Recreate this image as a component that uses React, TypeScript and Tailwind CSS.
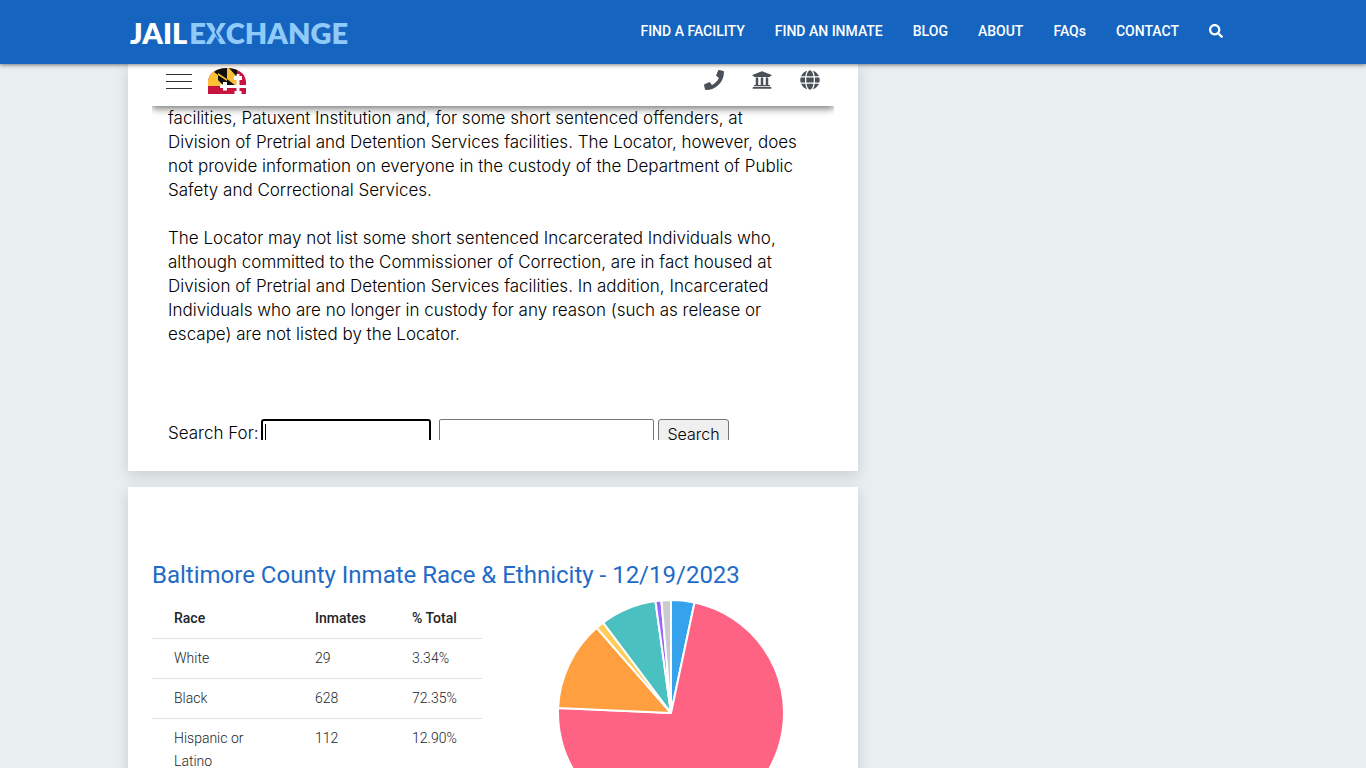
import { FaPhone, FaUniversity, FaGlobe, FaSearch } from "react-icons/fa";

const links = ["FIND A FACILITY", "FIND AN INMATE", "BLOG", "ABOUT", "FAQs", "CONTACT"];

const rows = [
  { race: "White", inmates: "29", total: "3.34%" },
  { race: "Black", inmates: "628", total: "72.35%" },
  { race: "Hispanic or Latino", inmates: "112", total: "12.90%" },
];

const slices = [
  { value: 3.34, color: "#36a2eb" },
  { value: 72.35, color: "#ff6384" },
  { value: 12.9, color: "#ff9f40" },
  { value: 1.15, color: "#ffcd56" },
  { value: 8.06, color: "#4bc0c0" },
  { value: 0.85, color: "#9966ff" },
  { value: 1.35, color: "#c9cbcf" },
];

function Pie() {
  const r = 113;
  let acc = 0;
  return (
    <svg viewBox="-114 -114 228 228" className="h-[228px] w-[228px]" role="img" aria-label="Inmate race and ethnicity">
      {slices.map((s) => {
        const a = (acc / 100) * 2 * Math.PI;
        acc += s.value;
        const b = (acc / 100) * 2 * Math.PI;
        const large = s.value > 50 ? 1 : 0;
        const d = `M0 0L${r * Math.sin(a)} ${-r * Math.cos(a)}A${r} ${r} 0 ${large} 1 ${r * Math.sin(b)} ${-r * Math.cos(b)}Z`;
        return <path key={s.color} d={d} fill={s.color} stroke="#fff" strokeWidth="2" strokeLinejoin="bevel" />;
      })}
    </svg>
  );
}

function FlagLogo() {
  return (
    <svg viewBox="0 0 38 26" className="h-[26px] w-[38px]" aria-hidden="true">
      <defs>
        <clipPath id="dome">
          <path d="M0 26V13C1 5 9 0 19 0S37 5 38 13V26Z" />
        </clipPath>
      </defs>
      <g clipPath="url(#dome)">
        <path d="M0 0H38V26H0Z" fill="#c8123f" />
        <path d="M0 0H29V18H0Z" fill="#fdbf35" />
        <path d="M6 4L10 0V7ZM10 0H19V11L10 5ZM10 7L19 13V18H16L10 12ZM19 11L28 18H19ZM21 0H29V9Z" fill="#111" />
        <path d="M28.500 6h3v2h2.500v4h-2.500v5H38v3h-6.500v3h2v3h-7v-3h2v-3H19v2.500h-4V20h-3v-3.500h3V14h4v3h9.500v-5H26V8h2.500Z" fill="#fff" />
      </g>
    </svg>
  );
}

export default function App() {
  return (
    <div className="min-h-screen bg-[#e9eef1] font-['Roboto',sans-serif]">
      <header className="sticky top-0 z-20 bg-[#1565c0] shadow-[0_1px_4px_rgba(0,0,0,0.5)]">
        <div className="mx-auto flex h-16 max-w-[1140px] items-center justify-between pr-[30px] pl-[17px]">
          <a href="#home" className="flex items-center gap-[2px] pt-[2px] font-['Lato',sans-serif] text-[29px] leading-8 font-extrabold text-white">
            <span>JAIL</span>
            <span className="text-[#90caf9]">
              E
              <span className="relative">
                X
                <svg viewBox="0 0 20 22" className="absolute top-[7px] left-0 h-[22px] w-5" aria-hidden="true">
                  <path d="M14 0L9 10L13 17" fill="none" stroke="#1565c0" strokeWidth="1.500" />
                </svg>
              </span>
              CHANGE
            </span>
          </a>
          <nav className="flex items-center gap-[30px] pb-[2px] text-sm font-medium text-white">
            {links.map((l) => (
              <a key={l} href="#nav">
                {l}
              </a>
            ))}
            <button type="button" aria-label="Search site">
              <FaSearch className="size-[14px]" />
            </button>
          </nav>
        </div>
      </header>

      <main className="mx-auto flex max-w-[1140px] flex-col gap-4 px-[15px]">
        <section className="w-full max-w-[730px] bg-white px-6 pb-[31px] shadow-[0_4px_14px_rgba(0,0,0,0.14)]">
          <div className="flex h-[376px] flex-col overflow-hidden font-['Inter',sans-serif] text-[17px] leading-6 font-light text-black">
            <div className="relative z-10 flex h-[42px] shrink-0 items-start justify-between bg-white px-[14px] pt-1 text-[#495057] shadow-[0_2px_8px_rgba(0,0,0,0.6)]">
              <div className="flex items-center gap-4">
                <button type="button" aria-label="Open menu" className="flex w-[26px] flex-col gap-[6px]">
                  <span className="h-px bg-[#333]" />
                  <span className="h-px bg-[#333]" />
                  <span className="h-px bg-[#333]" />
                </button>
                <FlagLogo />
              </div>
              <div className="flex gap-7 pt-[2px]">
                <a href="#phone" aria-label="Phone">
                  <FaPhone className="size-5" />
                </a>
                <a href="#agencies" aria-label="Agencies">
                  <FaUniversity className="size-5" />
                </a>
                <a href="#language" aria-label="Language">
                  <FaGlobe className="size-5" />
                </a>
              </div>
            </div>
            <div className="shrink-0 px-4">
              <p>
                facilities, Patuxent Institution and, for some short sentenced offenders, at
                <br />
                Division of Pretrial and Detention Services facilities. The Locator, however, does
                <br />
                not provide information on everyone in the custody of the Department of Public
                <br />
                Safety and Correctional Services.
              </p>
              <p className="mt-6">
                The Locator may not list some short sentenced Incarcerated Individuals who,
                <br />
                although committed to the Commissioner of Correction, are in fact housed at
                <br />
                Division of Pretrial and Detention Services facilities. In addition, Incarcerated
                <br />
                Individuals who are no longer in custody for any reason (such as release or
                <br />
                escape) are not listed by the Locator.
              </p>
              <form className="mt-[73px] flex items-start">
                <label htmlFor="term" className="w-[93px] pt-[2px]">
                  Search For:
                </label>
                <span className="flex h-[30px] w-[170px] items-center rounded-[3px] border-2 border-black px-[2px]">
                  <span className="h-5 w-px bg-black" />
                  <input id="term" className="w-full outline-none" />
                </span>
                <input aria-label="Second search term" className="ml-2 h-[30px] w-[215px] rounded-[2px] border border-[#767676]" />
                <button type="button" className="ml-1 h-[30px] w-[71px] rounded-[3px] border border-[#767676] bg-[#efefef] text-base">
                  Search
                </button>
              </form>
            </div>
          </div>
        </section>

        <section className="w-full max-w-[730px] bg-white px-6 pt-[72px] pb-10 shadow-[0_4px_14px_rgba(0,0,0,0.14)]">
          <h2 className="text-2xl leading-8 text-[#1f6bc7]">Baltimore County Inmate Race &amp; Ethnicity - 12/19/2023</h2>
          <div className="mt-2 flex">
            <table className="w-[330px] table-fixed self-start text-left text-sm leading-[23px] text-[#212529]">
              <colgroup>
                <col className="w-[141px]" />
                <col className="w-[97px]" />
                <col />
              </colgroup>
              <thead>
                <tr className="border-b border-[#dee2e6]">
                  <th className="py-2 pl-[22px] font-medium">Race</th>
                  <th className="py-2 pl-[22px] font-medium">Inmates</th>
                  <th className="py-2 pl-[22px] font-medium">% Total</th>
                </tr>
              </thead>
              <tbody>
                {rows.map((row) => (
                  <tr key={row.race} className="border-b border-[#dee2e6] align-top font-light">
                    <td className="py-2 pr-5 pl-[22px]">{row.race}</td>
                    <td className="py-2 pl-[22px]">{row.inmates}</td>
                    <td className="py-2 pl-[22px]">{row.total}</td>
                  </tr>
                ))}
              </tbody>
            </table>
            <div className="flex flex-1 justify-center pl-[26px]">
              <Pie />
            </div>
          </div>
        </section>
      </main>
    </div>
  );
}
